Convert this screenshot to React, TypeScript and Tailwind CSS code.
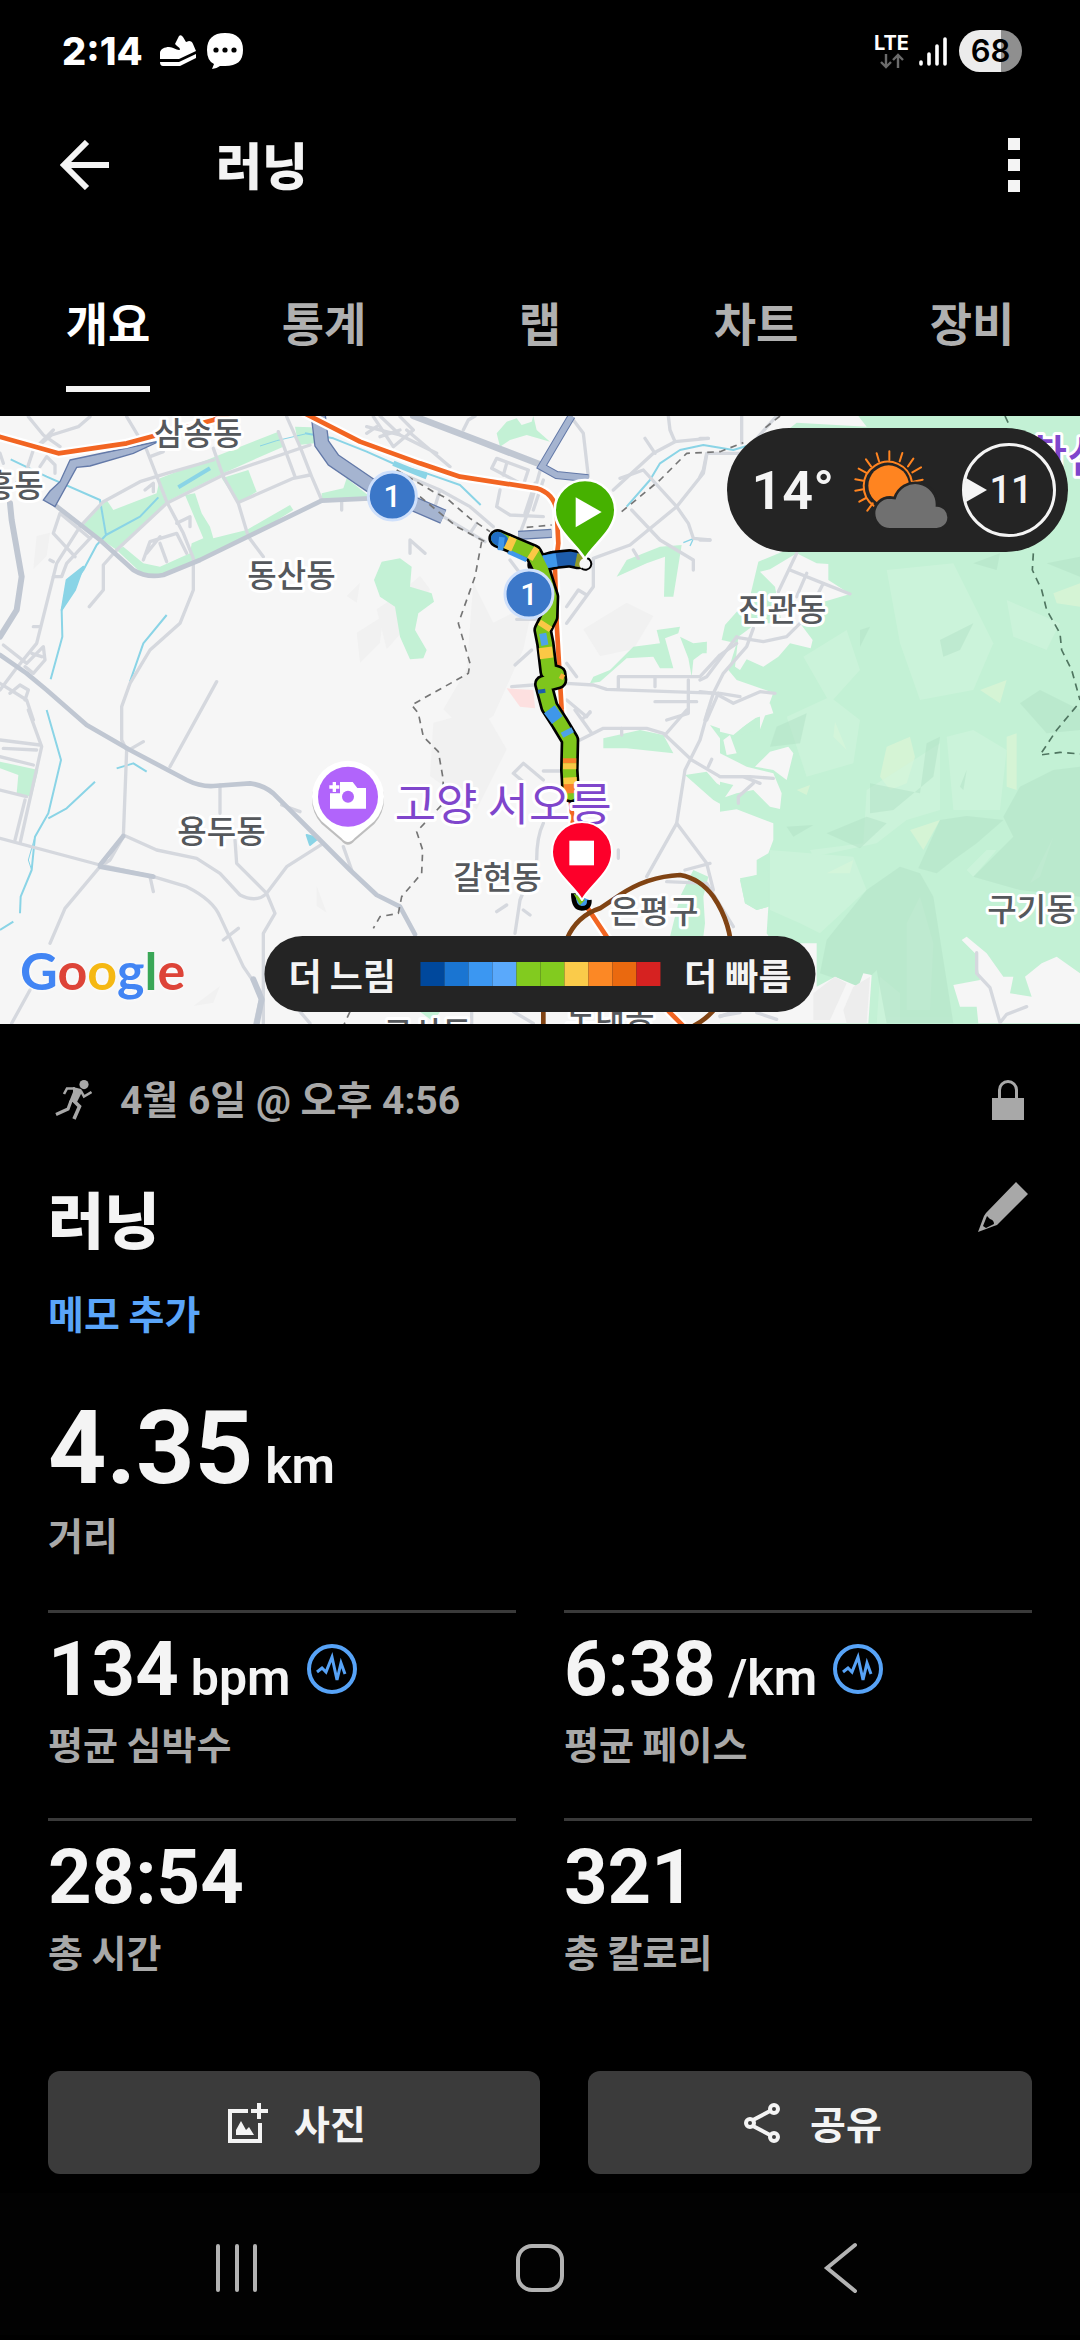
import { useState } from "react";

const tabs = ["개요", "통계", "랩", "차트", "장비"];

const paceColors = [
    "bg-[#00489c]",
    "bg-[#1a75d2]",
    "bg-[#3b97f2]",
    "bg-[#5aa9fb]",
    "bg-[#82cb1f]",
    "bg-[#82cb1f]",
    "bg-[#facb4a]",
    "bg-[#fc8825]",
    "bg-[#ea690f]",
    "bg-[#d62221]",
];

const stats = [
    { value: "134", unit: "bpm", label: "평균 심박수", chart: true },
    { value: "6:38", unit: "/km", label: "평균 페이스", chart: true },
    { value: "28:54", unit: "", label: "총 시간", chart: false },
    { value: "321", unit: "", label: "총 칼로리", chart: false },
];

// Place names, in map units (3 per pixel)
const places = [
    { name: "삼송동", x: 462, y: 87 },
    { name: "원흥동", x: -134, y: 242 },
    { name: "동산동", x: 742, y: 512 },
    { name: "진관동", x: 2214, y: 616 },
    { name: "용두동", x: 532, y: 1282 },
    { name: "갈현동", x: 1360, y: 1420 },
    { name: "은평구", x: 1830, y: 1520 },
    { name: "구기동", x: 2962, y: 1514 },
    { name: "구산동", x: 1150, y: 1886 },
    { name: "도대동", x: 1698, y: 1832 },
];

const StatusBar = () => {
    return (
        <div className="flex h-[102px] items-center justify-between pl-[62px] pr-[58px]">
            <div className="flex items-center">
                <span className="font-['Inter'] text-[38px] leading-10 font-extrabold">
                    2:14
                </span>
                <svg className="ml-4 h-8 w-10" viewBox="0 0 40 32" fill="#fff">
                    <path d="M1 24V18C1 14 6 12 10 12C14 12 17 15 20 15C22 15 21 13 18 11L16 9L20 1Q22 -1 24 2L27 7L30 6Q33 6 34 9L37 16L20 24Z" />
                    <path d="M1 27H20L37 19V23L21 31H4Q1 31 1 27Z" />
                </svg>
                <svg className="ml-2 h-9 w-9" viewBox="0 0 36 36">
                    <path
                        d="M18 0C30 0 36 6 36 17C36 28 30 33 18 33L13 33Q9 36 5 36L7 31Q0 28 0 17C0 6 6 0 18 0Z"
                        fill="#fff"
                    />
                    <circle cx="9" cy="17" r="2.6" />
                    <circle cx="18" cy="17" r="2.6" />
                    <circle cx="27" cy="17" r="2.6" />
                </svg>
            </div>
            <div className="flex items-center">
                <div className="flex flex-col items-center">
                    <span className="font-['Inter'] text-[20px] leading-5 font-bold">
                        LTE
                    </span>
                    <svg
                        className="h-4 w-6"
                        viewBox="0 0 24 16"
                        fill="none"
                        stroke="#6b6b6b"
                        strokeWidth="2.4"
                    >
                        <path d="M6 1V14M1 9L6 14L11 9" />
                        <path d="M18 15V2M13 7L18 2L23 7" />
                    </svg>
                </div>
                <svg
                    className="ml-2.5 h-[30px] w-7"
                    viewBox="0 0 28 30"
                    stroke="#fff"
                    strokeWidth="3.6"
                    strokeLinecap="round"
                >
                    <path d="M2 26V28M10 18V28M18 10V28M26 3V28" />
                </svg>
                <span className="ml-3 flex h-[42px] w-[63px] items-center justify-center rounded-full bg-linear-to-r from-[#ececec] from-67% to-[#8f8f8f] to-67% font-['Inter'] text-[31px] font-semibold text-black">
                    68
                </span>
            </div>
        </div>
    );
};

const Header = () => {
    return (
        <header className="flex h-[126px] items-center px-[60px]">
            <button type="button" aria-label="뒤로">
                <svg
                    className="size-[50px]"
                    viewBox="0 0 50 50"
                    fill="none"
                    stroke="#f4f4f4"
                    strokeWidth="6"
                >
                    <path d="M49 25H5M27 2L4 25L27 48" />
                </svg>
            </button>
            <h1 className="ml-[106px] flex-1 pb-1 text-[50px] leading-[60px] font-black text-[#f4f4f4]">
                러닝
            </h1>
            <button
                type="button"
                aria-label="더보기"
                className="flex flex-col gap-[9px]"
            >
                <span className="size-3 bg-[#f4f4f4]" />
                <span className="size-3 bg-[#f4f4f4]" />
                <span className="size-3 bg-[#f4f4f4]" />
            </button>
        </header>
    );
};

const MapDrawing = () => {
    return (
        <svg
            className="h-full w-full"
            viewBox="0 0 3240 1824"
            preserveAspectRatio="xMidYMid slice"
            fill="none"
            strokeLinejoin="round"
        >
            <rect width="3240" height="1824" fill="#f6f6f6" />

            {/* hills */}
            <g fill="#f1f1f1">
                <path d="M1130 580L1190 540L1260 480L1290 520L1230 620L1160 700Z" />
                <path d="M1420 500L1480 620L1600 560L1570 700L1480 900L1400 950L1330 880L1400 760Z" />
                <path d="M1300 920L1450 880L1520 1000L1430 1180L1290 1080Z" />
                <path d="M1070 650L1150 600L1140 680L1080 740Z" />
                <path d="M1750 640L1880 560L1960 600L1900 700L1800 720Z" />
                <path d="M1040 540L1080 500L1070 560ZM110 360L150 350L140 420L100 460Z" />
                <path d="M950 1410L980 1490L950 1470ZM580 1770L660 1710L640 1760Z" />
            </g>

            {/* parks and woods */}
            <g fill="#c3f1d5">
                <g transform="translate(0 -18)">
                    <path d="M480 205L620 150L835 65L850 110L680 185L500 275L350 420L300 385L245 350L320 270L340 300L470 250Z" />
                    <path d="M665 205L745 180L770 245L715 280Z" />
                    <path d="M555 255L585 250L605 310L630 350L640 385L700 370L740 360L870 285L880 300L745 385L600 445L480 500L430 495L350 420L370 410L430 460L480 470L570 430L575 400L610 385Z" />
                    <path d="M885 50L935 52L945 100L895 105ZM965 250L1030 235L1040 205L1110 260L965 270Z" />
                </g>
                <g transform="translate(1080 -18)">
                    <path d="M65 455L120 445L155 470L150 530L215 550L222 575L175 610L165 660L200 720L190 745L150 748L120 680L105 590L60 560L42 510Z" />
                    <path d="M410 70L440 35L470 25L485 45L515 35L520 18L530 60L570 95L500 75L450 90L420 110Z" />
                    <path d="M770 500L800 450L900 410L965 405L940 560L912 560L915 440L860 460Z" />
                    <path d="M690 820L700 800L750 780L820 710L900 700L890 660L960 650L955 670L915 685L940 775L900 775L880 740L800 745L720 815Z" />
                    <path d="M960 680L1000 700L1040 695L1040 720L1000 750L995 800L985 745Z" />
                </g>
                <g transform="translate(1140 882)">
                    <path d="M670 85L780 60L850 75L880 130L740 115L670 115Z" />
                    <path d="M990 45L1060 70L1140 15V190L1090 150L1035 105Z" />
                    <path d="M915 195L980 185L1010 220L1060 250L1140 250V310L1070 310L1000 270Z" />
                    <path d="M1085 500L1140 460V600L1090 560Z" />
                    <path d="M900 560L940 480L985 500L970 560L975 640L970 680H870L880 640ZM120 905h60l-20 30z" />
                </g>
                <path d="M0 1037L115 1062L95 1142L50 1132L55 1077L0 1057Z" />
                <path d="M2575 0L2600 32L2390 20L2340 60L2360 402L2275 437L2250 542L2175 627L2165 672L2210 682L2185 762L2210 792L2320 830L2280 940L2190 965L2160 950V1900H3240V0Z" />
                <path d="M2100 682L2120 677V712H2100Z" />
            </g>
            <path
                d="M440 817L520 822L525 877L480 872Z"
                transform="translate(1080 0)"
                fill="#fde0e0"
            />

            {/* mountain relief */}
            <g transform="translate(2160 882)">
                <g fill="#e2f6d6" opacity=".6">
                    <path d="M500 110L570 80L585 140L560 220L510 240L480 200Z" />
                    <path d="M570 360L660 330L610 420ZM320 490L400 450L390 490Z" />
                    <path d="M860 80L890 70V240L860 230ZM345 35L380 120L340 80Z" />
                    <path d="M780 -60L860 -90L840 -20ZM1000 -350L1080 -380V-310L1010 -320ZM230 240L270 225L260 255Z" />
                </g>
                <g fill="#d3f6df" opacity=".5">
                    <path d="M200 20L330 -40L420 30L400 160L260 200Z" />
                    <path d="M150 420L400 440L440 540L300 670L240 640L150 600Z" />
                    <path d="M440 240L660 100V300L560 330L470 400L280 440L270 420L430 400Z" />
                    <path d="M500 -420L700 -440L820 -200L760 -60L600 -30L540 -200Z" />
                    <path d="M680 80L760 60L860 120L840 300L700 300Z" />
                    <path d="M830 420L760 500L740 480L800 420ZM1000 380L960 500L930 520Z" />
                    <path d="M560 640L600 560L640 700L630 900H560ZM250 -160L380 -240L420 -120L330 -20Z" />
                    <path d="M860 -330L1020 -260L980 -180L880 -220ZM480 800L540 850V940H470Z" />
                </g>
                <g fill="#b3e2c7" opacity=".5">
                    <path d="M660 330L740 318L850 330L770 400L700 450L650 490L595 475Z" />
                    <path d="M900 230L1000 180L1080 170V560L900 540L760 500L880 380L850 320Z" />
                    <path d="M440 540L540 470L600 490L640 560L700 940H500L470 780L420 830L300 790L320 690Z" />
                    <path d="M320 370L440 320L500 340L420 415ZM200 350L280 345L220 380Z" />
                    <path d="M450 220L600 250L620 100L660 80L640 200L520 300L450 310Z" />
                    <path d="M980 -440L1080 -460V-400L1030 -420ZM760 -440L840 -470L830 -420Z" />
                    <path d="M660 -210L760 -260L720 -180L670 -160ZM420 -240L450 -250L420 -190Z" />
                    <path d="M900 -20L960 -60L1080 0V60L980 70ZM720 230L740 180L730 240Z" />
                    <path d="M150 110L170 50L260 10L240 100Z" />
                </g>
                <g fill="#f6f6f6">
                    <path d="M0 0H100L150 -20L160 10L100 25L40 75L0 65ZM10 90L30 75L50 130L20 135Z" />
                    <path d="M105 170L150 125L205 110L220 130L200 210L160 180Z" />
                    <path d="M0 130L80 170L160 190L185 250L180 297L150 290L100 240L50 250L15 262L40 225L0 215Z" />
                    <path d="M0 305L50 298L160 340L160 390L145 430L110 450L110 495L60 510L75 580L110 600L145 590L140 670L160 700H290V830L345 800L415 830L430 790L455 795L445 940H0Z" />
                    <path d="M725 690L740 680L800 730L850 800L880 800L870 850L935 860L915 800L965 760L1010 740L1080 790V940H775L770 890L720 890L700 825L780 810L765 730Z" />
                </g>
                <path d="M60 505L75 580L110 600L145 590V480L110 495Z" fill="#c3f1d5" />
                <path
                    d="M280 850L345 800L380 820L330 930H280ZM370 900L400 830L450 800L440 940H380Z"
                    fill="#ededed"
                />
            </g>
            <path
                d="M290 430L350 460L385 462V510L450 552L372 575L300 640L338 690L332 715L270 700L235 740L190 770L140 748L120 780L105 770L115 680L170 640L245 640L225 530L180 485L210 478Z"
                transform="translate(2100 -18)"
                fill="#f6f6f6"
            />

            {/* streams */}
            <g stroke="#8ad4e6" strokeWidth="6">
                <g transform="translate(0 -18)">
                    <path d="M32 148L140 200L300 270L318 375L290 405L250 480L200 550L185 600L187 680L152 808M318 375L420 320L475 262M500 615L430 700L390 815" />
                    <path d="M535 232L630 175" strokeWidth="12" />
                    <path
                        d="M250 470L200 510L185 600L225 540Z"
                        fill="#8ad4e6"
                    />
                    <path d="M780 108L830 92L915 72" strokeWidth="3" />
                    <path d="M915 70L1000 85L1100 125L1190 165L1280 190L1380 225L1442 285" />
                    <path d="M1180 160L1280 200" strokeWidth="16" />
                    <path d="M1880 290L1950 210L1980 160L2040 120L2110 105L2200 120L2240 108" />
                </g>
                <g transform="translate(0 882)">
                    <path d="M140 0L183 150L145 310L105 380L95 480L62 560L60 610M40 635L0 660M145 325L200 295L285 215M350 175L400 160L440 185" />
                    <path d="M920 375L955 385L930 405Z" fill="#8ad4e6" />
                    <path d="M105 380L85 450L95 480" strokeWidth="3" />
                </g>
                <path d="M2050 380L2080 368L2070 390" strokeWidth="4" />
            </g>

            {/* minor roads */}
            <g stroke="#d5d8de" strokeWidth="10" strokeLinecap="round">
                <g transform="translate(0 -18)">
                    <path d="M85 20L130 75L180 110M160 60L120 100M270 20L235 50L155 75L100 120L80 180L40 230" />
                    <path d="M380 20L440 120L500 275L550 370L580 445L580 540L540 640L450 720L390 820L365 890V990L380 1020L370 1280" />
                    <path d="M640 115L670 200L715 280L745 380L790 440M835 65L885 200M860 20L900 110L935 200L965 270" />
                    <path d="M240 350L310 275L420 215L500 190L640 150M350 420L500 280L680 190L930 105M720 275L880 205L930 195" />
                    <path d="M270 385L180 310L160 370L225 440M240 350L170 460L110 700L45 780L0 840M350 420L310 465V540L268 590" />
                    <path d="M430 450L450 395L530 370L560 430M480 400L500 455M530 340L570 320V350M440 430L480 380" />
                    <path d="M0 130L10 160M100 650H120M150 450L160 455M160 500H185L200 460L275 380M1025 275V300" />
                    <path d="M10 705L80 760L130 710L135 750L100 790L75 770M95 730L125 740" />
                    <path d="M0 820L80 870L100 930M30 850L60 825L85 840L75 870M650 815L510 1070" />
                    <path d="M120 170L140 140L165 165V190M450 140L490 125M435 240L460 220L460 245" />
                    <path d="M1120 20L1180 110L1240 60L1200 20M1140 80L1200 60M1100 70L1130 50" />
                </g>
                <g transform="translate(1080 -18)">
                    <path d="M20 50L120 75L230 130M140 60L270 170M310 60L325 30L345 18M60 18L120 75M640 30L670 70L685 200" />
                    <path d="M925 18L930 60L945 95L880 130L760 240M945 95L1045 85M855 85L885 130" />
                    <path d="M780 205L850 180L950 290L985 340L1000 385L1050 390M815 300L900 390L1000 450V480" />
                    <path d="M1040 135L1030 190L950 290L810 405L700 445M700 445V530L620 640M620 590L655 540L680 555" />
                    <path d="M395 175L410 145L505 180L490 225L395 175M545 165L510 290L480 370M525 220L495 310M550 210L520 300" />
                    <path d="M420 240L410 290L450 315L550 320M120 190L240 240L330 290L400 350M240 240L225 290M440 160L430 195" />
                    <path d="M250 320L375 395M330 370L350 340M150 430V390L195 430M450 450L480 490V560M820 420L835 445" />
                    <path d="M455 830L520 825L620 820L700 825L740 838L1080 850L1140 860M775 835V800H1020L1080 735L1130 700" />
                    <path d="M985 810V910L920 930M885 800V830M885 875H1010M1075 850L1040 930M620 760L650 800M620 870L680 920L690 905M465 765L515 720" />
                    <path d="M470 628H540V720" />
                </g>
                <g transform="translate(2100 -18)">
                    <path d="M290 430L235 545M270 480L370 520L450 552M320 490L290 560M370 520L355 550M110 682L190 695L260 680L300 640" />
                    <path d="M160 655L140 710L70 790L40 850L15 930M110 680L20 800L0 810M0 845L45 850L100 880L180 845L225 850" />
                    <path d="M0 390H30M230 18L130 130H20L10 180L0 200M0 85H25M125 18V100" />
                </g>
                <g transform="translate(0 882)">
                    <path d="M0 385L300 465L460 500L560 530Q640 570 660 620L730 770L785 850L765 940M370 380L330 450L300 470L195 595L150 700M90 840L35 940" />
                    <path d="M370 375L470 420L590 445L660 490L720 555Q770 580 800 550L860 470L970 400M705 390L710 460L800 550L825 610L790 670V940" />
                    <path d="M660 225V310M450 500L460 545M670 690L715 655M395 115L430 95M0 90L120 105M0 240L80 260M75 270L45 390" />
                    <path d="M85 0L125 110L60 400M10 115L110 120M0 140L100 165M1030 410L1055 480M900 905L930 940M845 285L900 305" />
                </g>
                <g transform="translate(1140 882)">
                    <path d="M600 90L670 55H800L850 70L935 150L1020 200H1090L1140 220M985 0L960 90L915 180L890 340L800 500" />
                    <path d="M890 340L980 460L1000 540M915 480L990 460M920 0L855 75M585 0L635 70M610 25L630 8M725 55V75" />
                    <path d="M985 170L995 148M1120 220L1075 260V280M430 215L400 190L430 160L490 210M490 183H545" />
                    <path d="M490 340Q470 380 470 450L420 570L405 670M430 600L450 615M350 605L380 585M715 420V445" />
                    <path d="M275 905V945M400 905L460 940M860 515L980 520L1060 650" />
                    <path d="M1020 200H1110L1180 205M1020 920L1060 905" />
                </g>
                <path d="M2930 1610L2930 1672L2970 1715L3000 1820L3020 1795L3080 1772M2160 1800L2220 1790M2270 1790L2330 1810" />
            </g>

            {/* arterial roads */}
            <g stroke="#c0c7d2" strokeWidth="14" strokeLinecap="round">
                <path d="M165 267L300 372L400 462Q440 487 490 477L600 432L965 254L1110 247" />
                <path d="M0 717L80 772L140 822L260 927L390 1002L560 1092Q600 1112 640 1110L750 1102Q790 1107 820 1132L960 1272L1050 1362L1130 1437L1200 1472L1245 1555" />
                <path
                    d="M30 262L35 312L65 482L50 582L0 662M760 1690L785 1750L770 1824"
                    strokeWidth="18"
                />
                <path d="M1240 0L1430 72L1625 147" strokeWidth="20" />
                <path d="M300 1347L370 1260M300 1352L460 1382" />
            </g>

            {/* expressways */}
            <g strokeLinejoin="miter">
                <g fill="#a5b4d0" stroke="#6379a8" strokeWidth="4">
                    <path d="M210 132L480 75L400 112L270 150L230 154L165 272L130 252L150 225L180 197Z" />
                </g>
                <g stroke="#6379a8">
                    <path d="M955 0L965 82L1000 132L1110 207L1330 302" strokeWidth="46" />
                    <path d="M1715 0L1690 42L1625 152L1670 177L1765 187" strokeWidth="24" />
                    <path d="M1555 358L1655 352" strokeWidth="28" />
                </g>
                <g stroke="#a5b4d0">
                    <path d="M955 0L965 82L1000 132L1110 207L1330 302" strokeWidth="38" />
                    <path d="M1715 0L1690 42L1625 152L1670 177L1765 187" strokeWidth="18" />
                    <path d="M1555 358L1655 352" strokeWidth="20" />
                </g>
            </g>

            {/* railways and subway lines */}
            <path
                d="M-10 60L175 112L380 82L640 12L700 -10M910 -10L1080 77L1260 142L1380 182L1610 217Q1660 232 1670 282L1675 382L1665 462L1670 622L1685 882L1710 1132L1740 1442L1820 1562L2010 1790L2050 1830"
                stroke="#fff"
                strokeWidth="28"
            />
            <path
                d="M-10 60L175 112L380 82L640 12L700 -10M910 -10L1080 77L1260 142L1380 182L1610 217Q1660 232 1670 282L1675 382L1665 462L1670 622L1685 882L1710 1132L1740 1442L1820 1562L2010 1790L2050 1830"
                stroke="#f26522"
                strokeWidth="14"
            />
            <path
                d="M1630 1840V1780L1700 1570Q1730 1500 1800 1477L1860 1437Q1940 1382 2040 1377Q2100 1387 2140 1442Q2200 1530 2195 1640Q2180 1780 2080 1830"
                stroke="#804313"
                strokeWidth="14"
            />

            {/* district borders and tunnels */}
            <g stroke="#757575" strokeWidth="5" strokeDasharray="20 16">
                <path d="M1445 377L1425 482L1375 622L1410 742L1405 772L1235 867L1255 892L1270 962L1315 1007L1330 1092L1325 1167L1250 1247L1268 1302L1265 1372L1205 1442L1195 1492L1140 1502L1120 1537M1050 1787L1030 1830" />
                <path d="M1190 162L1300 227L1340 247L1410 307L1470 347M1260 242L1370 332L1455 377M1580 334L1655 327M1865 287L1980 192L2060 112L2160 107L2230 80M2340 0L2290 40" />
            </g>
            <path
                d="M3015 0L3030 32M3100 412L3097 462L3125 522L3140 582L3180 652L3185 702L3215 762L3240 852M3230 870L3170 942L3120 1017L3180 1009L3240 1014"
                stroke="#4f7560"
                strokeWidth="5"
                strokeDasharray="22 16"
            />

            {/* recorded track */}
            <g transform="translate(1080 -18)">
                <g stroke="#000" strokeWidth="56" strokeLinecap="round">
                    <path d="M655 450L630 445L580 450L530 465M413 385L460 405L520 430L545 480L570 560L568 620L548 660L556 700L566 785L592 793L594 810L550 822L568 890L600 940L630 990L628 1080L632 1150" />
                </g>
                <g strokeWidth="40">
                    <path d="M662 451L630 445L580 450L520 465" stroke="#1d5cab" />
                    <path d="M590 450L550 456" stroke="#3f97ea" />
                    <path d="M648 449L668 453" stroke="#8f9a2a" />
                    <path
                        d="M413 385L460 405L520 430L545 480L570 560L568 620L548 660L556 700L566 785L592 793L594 810L550 822L568 890L600 940L630 990L628 1080L632 1150"
                        stroke="#7ec51c"
                        strokeLinecap="round"
                    />
                    <path
                        d="M413 385L425 392"
                        stroke="#1f6cc4"
                        strokeLinecap="round"
                    />
                    <path d="M415 400L432 402M568 898L592 930" stroke="#3f97ea" />
                    <path d="M445 425L500 450" stroke="#3f97ea" strokeWidth="14" />
                    <path d="M440 396L462 406M512 426L528 436M556 712L560 745M550 655L560 640" stroke="#fbc845" />
                    <path d="M541 690L562 686M618 960L626 975" stroke="#4ea3e8" strokeWidth="36" />
                    <path d="M629 1045L629 1060M631 1120L632 1150" stroke="#f9822a" />
                    <path d="M629 1060L629 1078M630 1102L631 1122" stroke="#fbc845" />
                    <path d="M534 845L556 842" stroke="#1d5cab" strokeWidth="12" />
                    <path d="M600 797L612 803" stroke="#f9b03a" strokeWidth="16" />
                </g>
                <circle cx="676" cy="462" r="18" fill="#f6f6f6" />
                <path
                    d="M680 444A18 18 0 1 1 664 475"
                    stroke="#000"
                    strokeWidth="6"
                />
                <path
                    d="M640 1450Q640 1495 665 1495Q690 1495 688 1470"
                    stroke="#000"
                    strokeWidth="14"
                    fill="#3f97ea"
                />
                <path d="M640 1450L660 1485L675 1470Z" fill="#7ec51c" />
            </g>

            {/* labels */}
            <g
                fontFamily="'Noto Sans CJK KR', sans-serif"
                fontSize="96"
                fontWeight="500"
                fill="#55585c"
                stroke="#fff"
                strokeWidth="18"
                paintOrder="stroke"
            >
                {places.map((place) => (
                    <text key={place.name} x={place.x} y={place.y}>
                        {place.name}
                    </text>
                ))}
            </g>
            <g
                fontFamily="'Noto Sans CJK KR', sans-serif"
                fontSize="135"
                fill="#7f46cc"
                stroke="#fff"
                strokeWidth="18"
                paintOrder="stroke"
            >
                <text x="1184" y="1216">
                    고양 서오릉
                </text>
                <text x="3078" y="170" fontWeight="500">
                    한산
                </text>
            </g>

            {/* kilometre markers */}
            <g fontFamily="Roboto, sans-serif" fontSize="92" fontWeight="500">
                <circle cx="1177" cy="240" r="72" fill="#3b77c8" stroke="#cfe0fb" strokeWidth="9" />
                <text x="1177" y="273" textAnchor="middle" fill="#fff">
                    1
                </text>
                <circle cx="1587" cy="534" r="72" fill="#3b77c8" stroke="#cfe0fb" strokeWidth="9" />
                <text x="1587" y="567" textAnchor="middle" fill="#fff">
                    1
                </text>
            </g>

            {/* photo spot */}
            <g transform="translate(0 882)">
                <path
                    d="M1044 404Q1034 404 1024 392L965 342A108 108 0 1 1 1123 342L1064 392Q1054 404 1044 404Z"
                    fill="#9a9a9a"
                    opacity=".6"
                />
                <path
                    d="M1044 396Q1034 396 1024 384L965 334A108 108 0 1 1 1123 334L1064 384Q1054 396 1044 396Z"
                    fill="#fff"
                />
                <circle cx="1044" cy="260" r="90" fill="#b164fb" />
                <path
                    d="M990 250H1020V216H1058L1072 234H1098V296H990ZM998 216H1008V226H1018V236H1008V246H998V236H988V226H998Z"
                    fill="#fff"
                />
                <circle cx="1044" cy="260" r="18" fill="#b164fb" />
            </g>

            {/* start and finish pins */}
            <path
                d="M1755 430C1730 385 1664 345 1664 283A91 91 0 0 1 1846 283C1846 345 1780 385 1755 430Z"
                fill="#46b100"
                stroke="#fff"
                strokeWidth="8"
            />
            <path d="M1727 244L1805 288L1727 334Z" fill="#fff" />
            <path
                d="M1746 1452C1720 1405 1656 1370 1656 1308A90 90 0 0 1 1836 1308C1836 1370 1772 1405 1746 1452Z"
                fill="#fd002a"
                stroke="#fff"
                strokeWidth="6"
            />
            <path d="M1708 1274H1782V1348H1708Z" fill="#fff" />
        </svg>
    );
};

const WeatherPill = () => {
    return (
        <div className="absolute top-3 right-3 flex h-[124px] items-center rounded-full bg-[#242424] pr-3 pl-6 font-['Roboto'] text-[#f4f4f4]">
            <span className="text-[54px] font-semibold">14°</span>
            <svg className="ml-5 h-20 w-24" viewBox="0 0 288 240">
                <g
                    stroke="#ff8420"
                    strokeWidth="6"
                    strokeLinecap="round"
                    fill="none"
                >
                    <path d="M60 168A73 73 0 1 1 174 96" />
                    <path d="M106 30V4M137 34L145 9M162 49L178 26M175 67L201 52M178 95L206 89M75 34L68 10M51 49L36 28M36 68L14 56M28 92L4 88M28 118L4 122M36 144L16 155M56 160L40 182" />
                </g>
                <circle cx="104" cy="107" r="61" fill="#ff8420" />
                <path
                    d="M108 238A45 45 0 0 1 108 142L122 144A65 65 0 0 1 249 166A35 35 0 0 1 247 238Z"
                    fill="#707070"
                    stroke="#242424"
                    strokeWidth="8"
                />
            </svg>
            <div className="relative ml-3 flex size-[94px] items-center justify-center rounded-full border-[3px] border-[#f4f4f4] pl-1">
                <svg
                    className="absolute left-0 h-6 w-6"
                    viewBox="0 0 24 24"
                    fill="#f4f4f4"
                >
                    <path d="M1 0L22 12L1 24Q-2 12 1 0Z" />
                </svg>
                <span className="text-[38px] font-medium">11</span>
            </div>
        </div>
    );
};

const PaceLegend = () => {
    return (
        <div className="absolute bottom-3 left-1/2 flex h-[76px] -translate-x-1/2 items-center gap-6 rounded-full bg-[#242424] px-6 text-4xl font-bold whitespace-nowrap text-[#f4f4f4]">
            <span>더 느림</span>
            <div className="flex">
                {paceColors.map((color, index) => (
                    <span key={index} className={`size-6 ${color}`} />
                ))}
            </div>
            <span>더 빠름</span>
        </div>
    );
};

const GoogleLogo = () => {
    return (
        <span className="absolute bottom-7 left-5 font-['Lato'] text-[52px] leading-[52px] font-bold [text-shadow:0_0_4px_#fff]">
            <span className="text-[#4285f4]">G</span>
            <span className="text-[#dd4438]">o</span>
            <span className="text-[#f5b813]">o</span>
            <span className="text-[#4285f4]">g</span>
            <span className="text-[#3aa757]">l</span>
            <span className="text-[#dd4438]">e</span>
        </span>
    );
};

const PulseIcon = () => {
    return (
        <svg
            className="size-[50px]"
            viewBox="0 0 50 50"
            fill="none"
            stroke="#57a3f7"
        >
            <circle cx="25" cy="25" r="23" strokeWidth="4" />
            <path
                d="M10 28L15 24L19 28L25 13L30 36L34 19L38 30"
                strokeWidth="3"
            />
        </svg>
    );
};

const Summary = () => {
    return (
        <section className="px-12 pt-12">
            <div className="flex h-14 items-center text-[#a8a8a8]">
                <svg
                    className="ml-1.5 h-10 w-[38px]"
                    viewBox="0 0 38 40"
                    fill="none"
                    stroke="#a8a8a8"
                >
                    <circle cx="30" cy="4.6" r="4.6" fill="#a8a8a8" stroke="none" />
                    <path
                        d="M19 7L27 9Q29 11 27 14L23 22L15 22L19 12Z"
                        fill="#a8a8a8"
                        stroke="none"
                    />
                    <path d="M21 8.5H13L10 14M27 11L30 16.5L37.5 12" strokeWidth="2.6" />
                    <path d="M20 21L25.5 26.5L20 39" strokeWidth="3.6" />
                    <path d="M17 21L14 29L2 34.5" strokeWidth="3.2" />
                </svg>
                <p className="ml-7 flex-1 pt-0.5 font-['Roboto','Noto_Sans_CJK_KR',sans-serif] text-[39px] leading-[56px] font-bold">
                    4월 6일 @ 오후 4:56
                </p>
                <svg
                    className="mr-2 h-10 w-8"
                    viewBox="0 0 32 40"
                    fill="#a8a8a8"
                >
                    <path d="M0 18H6V10A10 10 0 0 1 26 10V18H32V40H0ZM9 18H23V10A7 7 0 0 0 9 10Z" />
                </svg>
            </div>

            <div className="mt-[54px] flex items-start justify-between">
                <h2 className="text-[61px] leading-[72px] font-black text-[#f4f4f4]">
                    러닝
                </h2>
                <button type="button" aria-label="이름 편집" className="mr-1">
                    <svg
                        className="size-[50px]"
                        viewBox="0 0 50 50"
                        fill="#a8a8a8"
                    >
                        <path d="M38 0L50 12L19 43L16 44L0 50L6 34L8 31ZM9 34L5 44L8 46L16 42Q16 38 12 37Z" />
                    </svg>
                </button>
            </div>
            <a
                href="#memo"
                className="mt-[30px] block text-[39px] leading-[56px] font-bold text-[#5aa5f9]"
            >
                메모 추가
            </a>

            <p className="mt-[54px] font-['Roboto'] text-[102px] leading-[108px] font-bold text-[#f4f4f4]">
                4.35
                <span className="ml-3 text-[50px] leading-none font-semibold">
                    km
                </span>
            </p>
            <p className="mt-1 text-[38px] leading-[56px] font-bold text-[#a8a8a8]">
                거리
            </p>

            <div className="mt-12 grid grid-cols-2 gap-x-12 gap-y-[47px]">
                {stats.map((stat) => (
                    <div
                        key={stat.label}
                        className="border-t-[3px] border-[#3a3a3a] pt-4"
                    >
                        <div className="flex items-center font-['Roboto'] text-[76px] leading-20 font-bold text-[#f4f4f4]">
                            <p>
                                {stat.value}
                                {stat.unit && (
                                    <span className="ml-3 text-[50px] leading-none font-semibold">
                                        {stat.unit}
                                    </span>
                                )}
                            </p>
                            {stat.chart && (
                                <span className="ml-4">
                                    <PulseIcon />
                                </span>
                            )}
                        </div>
                        <p className="mt-1.5 text-[38px] leading-[56px] font-bold text-[#a8a8a8]">
                            {stat.label}
                        </p>
                    </div>
                ))}
            </div>
        </section>
    );
};

const Actions = () => {
    return (
        <div className="mt-[92px] grid grid-cols-2 text-[39px] font-bold text-[#f4f4f4]">
            <div className="pl-12">
                <button
                    type="button"
                    className="flex h-[103px] w-full items-center justify-center gap-[26px] rounded-xl bg-[#3b3b3b] pl-1.5"
                >
                    <svg
                        className="size-10"
                        viewBox="0 0 40 40"
                        fill="none"
                        stroke="#f4f4f4"
                        strokeWidth="4"
                    >
                        <path d="M20 8H2V38H32V20" />
                        <path d="M31 0V16M23 8H40" />
                        <path
                            d="M8 32V27L13 18L18 27L21 24L26 32Z"
                            fill="#f4f4f4"
                            stroke="none"
                        />
                    </svg>
                    사진
                </button>
            </div>
            <div className="px-12">
                <button
                    type="button"
                    className="flex h-[103px] w-full items-center justify-center gap-[30px] rounded-xl bg-[#3b3b3b] pl-1.5"
                >
                    <svg
                        className="h-10 w-9"
                        viewBox="0 0 36 40"
                        fill="none"
                        stroke="#f4f4f4"
                        strokeWidth="4"
                    >
                        <path d="M9 17L26 8M9 23L26 32" />
                        <circle cx="30" cy="6" r="4" />
                        <circle cx="6" cy="20" r="4" />
                        <circle cx="30" cy="34" r="4" />
                    </svg>
                    공유
                </button>
            </div>
        </div>
    );
};

const NavigationBar = () => {
    return (
        <nav className="mt-[19px] flex h-[142px] items-center justify-between bg-[#020202] px-[211px] pt-2">
            <button type="button" aria-label="최근 앱">
                <svg
                    className="size-[52px]"
                    viewBox="0 0 52 52"
                    stroke="#b3b3b3"
                    strokeWidth="4"
                    strokeLinecap="round"
                >
                    <path d="M7 4V48M26 4V48M44 4V48" />
                </svg>
            </button>
            <button type="button" aria-label="홈">
                <svg
                    className="size-[52px]"
                    viewBox="0 0 52 52"
                    fill="none"
                    stroke="#b3b3b3"
                    strokeWidth="4"
                >
                    <rect x="4" y="4" width="44" height="44" rx="14" />
                </svg>
            </button>
            <button type="button" aria-label="이전">
                <svg
                    className="size-[52px]"
                    viewBox="0 0 52 52"
                    fill="none"
                    stroke="#b3b3b3"
                    strokeWidth="4"
                    strokeLinecap="round"
                >
                    <path d="M38 3L10 26L38 49" />
                </svg>
            </button>
        </nav>
    );
};

const App = () => {
    const [activeTab, setActiveTab] = useState("개요");

    return (
        <main className="min-h-screen overflow-hidden bg-black font-['Noto_Sans_CJK_KR',sans-serif] text-white">
            <StatusBar />
            <Header />
            <div role="tablist" className="grid h-[188px] grid-cols-5">
                {tabs.map((tab) => (
                    <button
                        key={tab}
                        type="button"
                        role="tab"
                        aria-selected={activeTab === tab}
                        onClick={() => setActiveTab(tab)}
                        className="flex items-end justify-center pb-6 text-[46px] leading-[60px] font-bold"
                    >
                        <span
                            className={
                                activeTab === tab
                                    ? "border-b-[6px] border-[#f4f4f4] pb-[35px] text-white"
                                    : "border-b-[6px] border-transparent pb-[35px] text-[#b0b0b0]"
                            }
                        >
                            {tab}
                        </span>
                    </button>
                ))}
            </div>
            <div className="relative h-[608px] overflow-hidden">
                <MapDrawing />
                <WeatherPill />
                <GoogleLogo />
                <PaceLegend />
            </div>
            <Summary />
            <Actions />
            <NavigationBar />
        </main>
    );
};

export default App;
